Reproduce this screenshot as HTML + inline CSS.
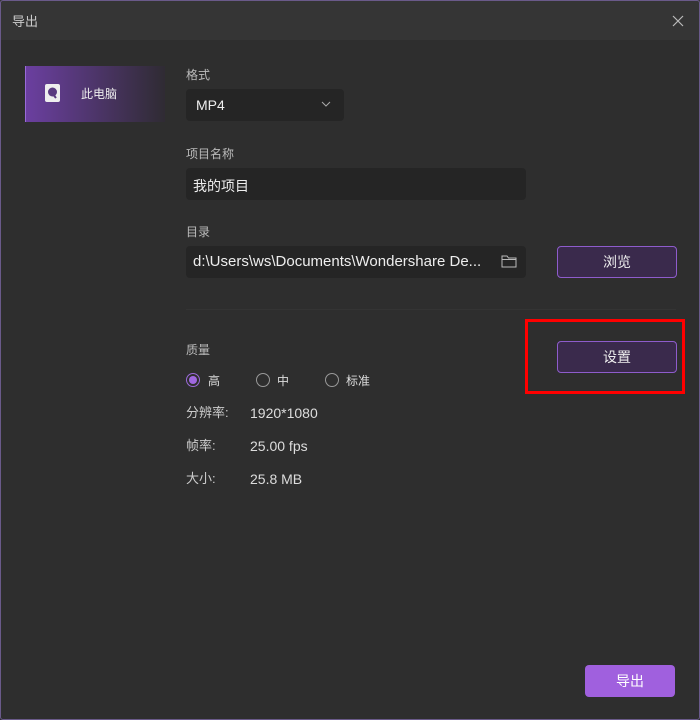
<!DOCTYPE html>
<html><head><meta charset="utf-8"><style>
*{margin:0;padding:0;box-sizing:border-box}
body{width:700px;height:720px;background:#2e2e2e;font-family:"Liberation Sans","Noto Sans CJK SC",sans-serif;color:#ddd;position:relative;overflow:hidden;white-space:nowrap}
.frame{position:absolute;left:0;top:0;width:700px;height:720px;border:1px solid #6a5a8a;border-radius:3px;pointer-events:none}
.title{position:absolute;left:0;top:0;width:700px;height:40px;background:#353535;}
.title span{position:absolute;left:12px;top:14px;font-size:13px;color:#ccc;line-height:1.2}
.abs{position:absolute}
.lbl{font-size:12px;color:#bbb;line-height:1.1}
.box{background:#252525;border-radius:4px;font-size:14px;color:#eee}
.btn{border:1px solid #8e5ccc;background:#3a2a4c;border-radius:4px;font-size:14px;color:#eee;text-align:center}
.radio{width:14px;height:14px;border:1px solid #999;border-radius:50%;display:inline-block}
</style></head><body>
<div class="title"><span>导出</span>
<svg class="abs" style="left:672px;top:15px" width="12" height="12"><path d="M1 1L11 11M11 1L1 11" stroke="#bbb" stroke-width="1.2"/></svg></div>
<div class="abs" style="left:25px;top:66px;width:140px;height:56px;background:linear-gradient(90deg,#6b3fa0,#2f2b33);border-left:1px solid #9a6ad8"></div>
<svg class="abs" style="left:44px;top:83px" width="18" height="20"><rect x="1" y="1" width="15" height="18" rx="2" fill="#eee"/><circle cx="8.5" cy="9" r="4.5" fill="#5a3a80"/><path d="M8 10L12 15" stroke="#5a3a80" stroke-width="2"/></svg>
<div class="abs lbl" style="left:81px;top:88px;color:#eee">此电脑</div>
<div class="abs lbl" style="left:186px;top:69px">格式</div>
<div class="abs box" style="left:186px;top:89px;width:158px;height:32px;padding:8px 10px">MP4</div>
<svg class="abs" style="left:321px;top:101px" width="10" height="6"><path d="M1 1L5 5L9 1" stroke="#aaa" fill="none"/></svg>
<div class="abs lbl" style="left:186px;top:148px">项目名称</div>
<div class="abs box" style="left:186px;top:168px;width:340px;height:32px;padding:8px 7px">我的项目</div>
<div class="abs lbl" style="left:186px;top:226px">目录</div>
<div class="abs box" style="left:186px;top:246px;width:340px;height:32px;padding:7px 7px;font-size:15px">d:\Users\ws\Documents\Wondershare De...</div>
<svg class="abs" style="left:501px;top:254px" width="16" height="14"><path d="M1 2H6L7.5 4H15V13H1Z M1 5.5H15" stroke="#bbb" fill="none"/></svg>
<div class="btn abs" style="left:557px;top:246px;width:120px;height:32px;line-height:30px">浏览</div>
<div class="abs" style="left:186px;top:309px;width:490px;height:1px;background:#343434"></div>
<div class="abs lbl" style="left:186px;top:344px">质量</div>
<div class="abs" style="left:186px;top:373px;font-size:12px;color:#ddd;line-height:14px">
<span class="abs" style="left:0;top:0;width:14px;height:14px;border:1px solid #9a6ad8;border-radius:50%"><span class="abs" style="left:2px;top:2px;width:8px;height:8px;border-radius:50%;background:#a068e0"></span></span><span class="abs" style="left:22px;top:1px">高</span>
<span class="abs radio" style="left:70px;top:0"></span><span class="abs" style="left:91px;top:1px">中</span>
<span class="abs radio" style="left:139px;top:0"></span><span class="abs" style="left:160px;top:1px">标准</span></div>
<div class="btn abs" style="left:557px;top:341px;width:120px;height:32px;line-height:30px">设置</div>
<div class="abs" style="left:525px;top:319px;width:160px;height:75px;border:3px solid #f00"></div>
<div class="abs" style="left:186px;top:406px;font-size:13px;color:#ccc;line-height:1.1">分辨率:</div><div class="abs" style="left:250px;top:405px;font-size:14px;color:#ddd">1920*1080</div>
<div class="abs" style="left:186px;top:439px;font-size:13px;color:#ccc;line-height:1.1">帧率:</div><div class="abs" style="left:250px;top:438px;font-size:14px;color:#ddd">25.00 fps</div>
<div class="abs" style="left:186px;top:472px;font-size:13px;color:#ccc;line-height:1.1">大小:</div><div class="abs" style="left:250px;top:471px;font-size:14px;color:#ddd">25.8 MB</div>
<div class="abs" style="left:585px;top:665px;width:90px;height:32px;background:#a060de;border-radius:4px;color:#fff;font-size:14px;text-align:center;line-height:32px">导出</div>
<div class="frame"></div>
</body></html>
